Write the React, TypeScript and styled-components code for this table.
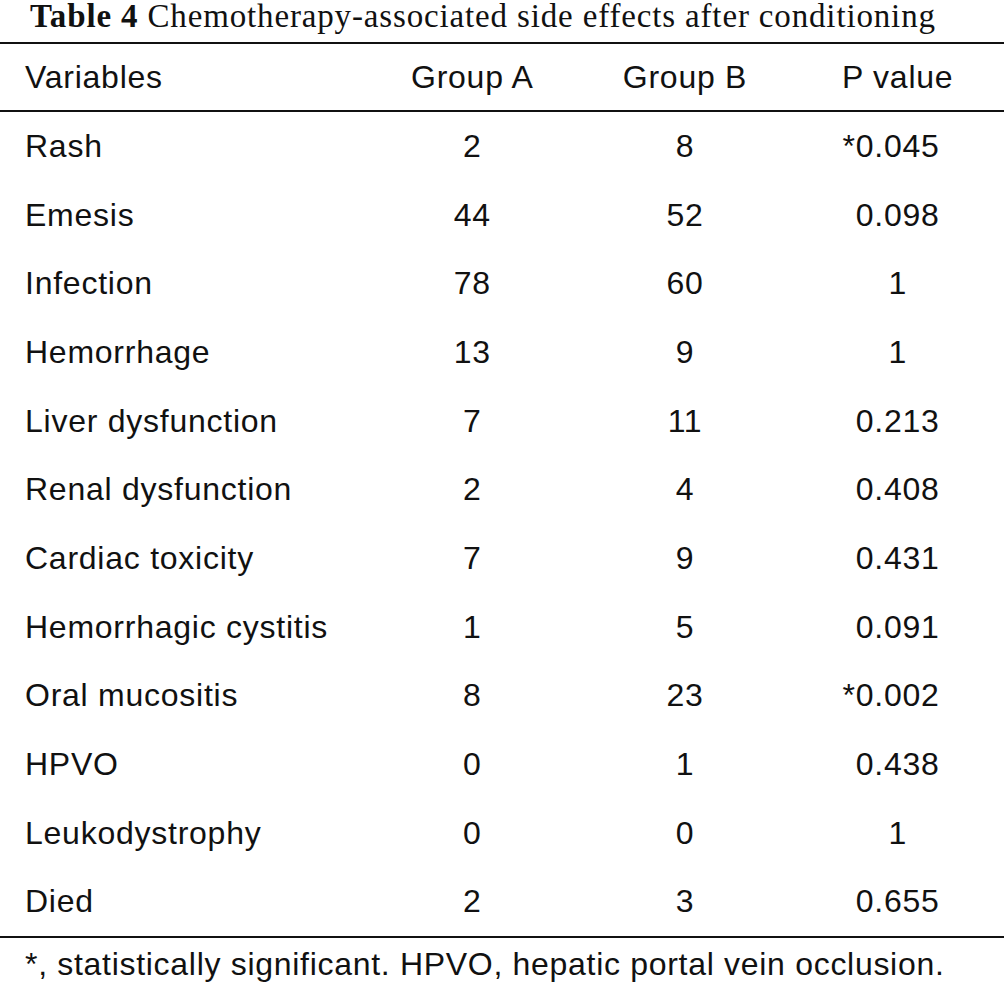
import React from "react";
import styled, { createGlobalStyle } from "styled-components";

const GlobalStyle = createGlobalStyle`
  html, body { margin: 0; padding: 0; background: #ffffff; }
  body { font-family: "Liberation Sans", Arial, sans-serif; color: #111; }
`;

const Page = styled.div`
  width: 1004px;
  background: #fff;
`;

const Caption = styled.div`
  height: 42px;
  padding-left: 30px;
  font-family: "Liberation Serif", "Times New Roman", serif;
  font-size: 33px;
  line-height: 33px;
  letter-spacing: 0.85px;
  color: #111;
  white-space: nowrap;
`;

const CaptionLabel = styled.b`
  font-weight: 700;
`;

const Grid = styled.div`
  display: grid;
  grid-template-columns: 366px 1fr 1fr 1fr;
  border-top: 2px solid #111;
  border-bottom: 2px solid #111;
`;

const Cell = styled.div<{ $align?: "left" | "center"; $head?: boolean }>`
  height: ${(p) => (p.$head ? "66px" : "68.67px")};
  line-height: ${(p) => (p.$head ? "66px" : "68.67px")};
  font-size: 32px;
  text-align: ${(p) => p.$align ?? "center"};
  padding-left: ${(p) => (p.$align === "left" ? "25px" : "0")};
  letter-spacing: 0.75px;
  white-space: nowrap;
  border-bottom: ${(p) => (p.$head ? "2px solid #111" : "none")};
  color: #111;
`;

const Star = styled.span`
  display: inline-block;
  width: 0;
  direction: rtl;
`;

const Footnote = styled.div`
  padding-left: 25px;
  font-size: 32px;
  line-height: 52px;
  letter-spacing: 0.7px;
  color: #111;
  white-space: nowrap;
`;

type Row = { name: string; a: string; b: string; p: string; sig?: boolean };

const rows: Row[] = [
  { name: "Rash", a: "2", b: "8", p: "0.045", sig: true },
  { name: "Emesis", a: "44", b: "52", p: "0.098" },
  { name: "Infection", a: "78", b: "60", p: "1" },
  { name: "Hemorrhage", a: "13", b: "9", p: "1" },
  { name: "Liver dysfunction", a: "7", b: "11", p: "0.213" },
  { name: "Renal dysfunction", a: "2", b: "4", p: "0.408" },
  { name: "Cardiac toxicity", a: "7", b: "9", p: "0.431" },
  { name: "Hemorrhagic cystitis", a: "1", b: "5", p: "0.091" },
  { name: "Oral mucositis", a: "8", b: "23", p: "0.002", sig: true },
  { name: "HPVO", a: "0", b: "1", p: "0.438" },
  { name: "Leukodystrophy", a: "0", b: "0", p: "1" },
  { name: "Died", a: "2", b: "3", p: "0.655" },
];

export default function App() {
  return (
    <Page>
      <GlobalStyle />
      <Caption>
        <CaptionLabel>Table 4</CaptionLabel> Chemotherapy-associated side effects after conditioning
      </Caption>
      <Grid>
        <Cell $head $align="left">Variables</Cell>
        <Cell $head>Group A</Cell>
        <Cell $head>Group B</Cell>
        <Cell $head>P value</Cell>
        {rows.map((r) => (
          <React.Fragment key={r.name}>
            <Cell $align="left">{r.name}</Cell>
            <Cell>{r.a}</Cell>
            <Cell>{r.b}</Cell>
            <Cell>
              {r.sig && <Star>*</Star>}
              {r.p}
            </Cell>
          </React.Fragment>
        ))}
      </Grid>
      <Footnote>*, statistically significant. HPVO, hepatic portal vein occlusion.</Footnote>
    </Page>
  );
}
